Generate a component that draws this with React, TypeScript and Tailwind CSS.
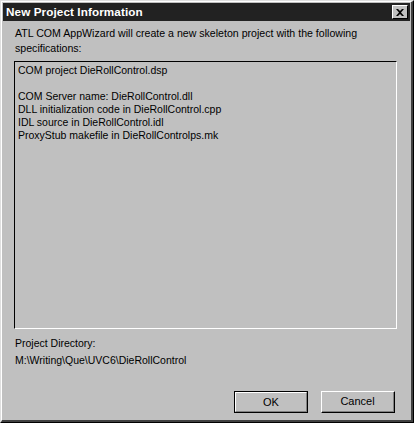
export default function App() {
  const font = { fontFamily: '"Liberation Sans", Arial, sans-serif' };
  return (
    <div className="w-[414px] h-[423px] bg-[#c0c0c0] overflow-hidden" style={font}>
      <div className="w-full h-full border-t border-l border-t-[#dfdfdf] border-l-[#dfdfdf] border-b border-r border-b-[#000] border-r-[#000] flex flex-col">
        <div className="flex-1 flex flex-col border-t border-l border-t-white border-l-white border-b-2 border-r-2 border-b-[#404040] border-r-[#404040] p-px">
          {/* title bar */}
          <div className="h-[18px] bg-[#222222] flex items-center justify-between pl-[3px] pr-[2px]">
            <span className="text-white font-bold text-[11.7px] leading-none tracking-[0.1px]">New Project Information</span>
            <div className="w-[16px] h-[14px] bg-[#c0c0c0] border-t border-l border-t-white border-l-white border-b border-r border-b-[#000] border-r-[#000] flex items-center justify-center">
              <svg width="8" height="7" viewBox="0 0 8 7">
                <path d="M0 0h2l2 2 2-2h2L5 3.5 8 7H6L4 5 2 7H0l3-3.5z" fill="#000" />
              </svg>
            </div>
          </div>
          {/* body */}
          <div className="flex-1 flex flex-col pl-[11px] pr-[13px] pt-[5px]">
            <p className="text-[10.6px] leading-[15px] text-black pl-[1px]">
              ATL COM AppWizard will create a new skeleton project with the following specifications:
            </p>
            <div className="mt-[5px] h-[268px] border-t border-l border-t-black border-l-black border-b border-r border-b-white border-r-white pl-[3px] pt-[2px] text-[10.5px] leading-[13px] text-black">
              <div>COM project DieRollControl.dsp</div>
              <div>&nbsp;</div>
              <div>COM Server name: DieRollControl.dll</div>
              <div>DLL initialization code in DieRollControl.cpp</div>
              <div>IDL source in DieRollControl.idl</div>
              <div>ProxyStub makefile in DieRollControlps.mk</div>
            </div>
            <div className="mt-[6px] pl-[1px] text-[10.5px] leading-[17px] text-black">
              <div>Project Directory:</div>
              <div>M:\Writing\Que\UVC6\DieRollControl</div>
            </div>
            <div className="flex-1" />
            <div className="flex justify-end gap-[13px] pb-[6px] pr-[2px]">
              <div className="w-[74px] h-[22px] border border-black">
                <div className="w-full h-full border-t border-l border-t-white border-l-white border-b border-r border-b-[#808080] border-r-[#808080] flex items-center justify-center text-[11px] text-black">
                  OK
                </div>
              </div>
              <div className="w-[74px] h-[22px] border-t border-l border-t-white border-l-white border-b border-r border-b-black border-r-black">
                <div className="w-full h-full border-b border-r border-b-[#808080] border-r-[#808080] flex items-center justify-center text-[11px] text-black">
                  Cancel
                </div>
              </div>
            </div>
          </div>
        </div>
      </div>
    </div>
  );
}
